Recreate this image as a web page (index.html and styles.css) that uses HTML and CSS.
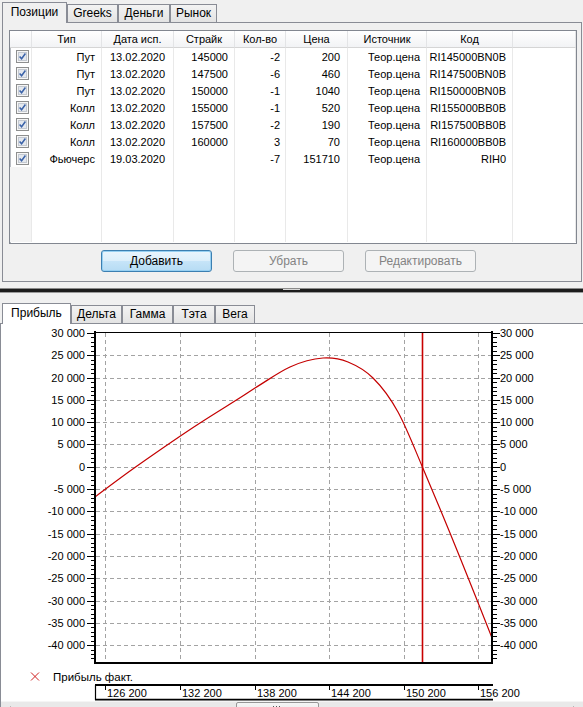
FILE: index.html
```html
<!DOCTYPE html>
<html lang="ru">
<head>
<meta charset="utf-8">
<title>Позиции</title>
<link rel="stylesheet" href="styles.css">
</head>
<body>
<div class="top">
  <div class="tabs">
    <div class="tab active t-pos">Позиции</div>
    <div class="tab t-greeks">Greeks</div>
    <div class="tab t-money">Деньги</div>
    <div class="tab t-market">Рынок</div>
  </div>
  <div class="panel">
    <div class="grid">
      <table class="pos">
        <colgroup>
          <col class="w-cb"><col class="w-type"><col class="w-date"><col class="w-strike"><col class="w-qty"><col class="w-price"><col class="w-src"><col class="w-code"><col class="w-rest">
        </colgroup>
        <thead>
          <tr><th></th><th>Тип</th><th>Дата исп.</th><th>Страйк</th><th>Кол-во</th><th>Цена</th><th>Источник</th><th>Код</th><th></th></tr>
        </thead>
        <tbody>
          <tr><td class="c"><svg class="cb" viewBox="0 0 13 13"><rect x="0.5" y="0.5" width="12" height="12" fill="#f6f6f6" stroke="#8e8f8f"/><rect x="2.5" y="2.5" width="8" height="8" fill="#e4e8ee" stroke="#c4c9d1"/><path d="M3.6 6.4l2 2.3 3.8-5.2" fill="none" stroke="#3a62a8" stroke-width="1.5"/></svg></td><td>Пут</td><td class="d">13.02.2020</td><td>145000</td><td class="q">-2</td><td class="p">200</td><td>Теор.цена</td><td>RI145000BN0B</td><td></td></tr>
          <tr><td class="c"><svg class="cb" viewBox="0 0 13 13"><rect x="0.5" y="0.5" width="12" height="12" fill="#f6f6f6" stroke="#8e8f8f"/><rect x="2.5" y="2.5" width="8" height="8" fill="#e4e8ee" stroke="#c4c9d1"/><path d="M3.6 6.4l2 2.3 3.8-5.2" fill="none" stroke="#3a62a8" stroke-width="1.5"/></svg></td><td>Пут</td><td class="d">13.02.2020</td><td>147500</td><td class="q">-6</td><td class="p">460</td><td>Теор.цена</td><td>RI147500BN0B</td><td></td></tr>
          <tr><td class="c"><svg class="cb" viewBox="0 0 13 13"><rect x="0.5" y="0.5" width="12" height="12" fill="#f6f6f6" stroke="#8e8f8f"/><rect x="2.5" y="2.5" width="8" height="8" fill="#e4e8ee" stroke="#c4c9d1"/><path d="M3.6 6.4l2 2.3 3.8-5.2" fill="none" stroke="#3a62a8" stroke-width="1.5"/></svg></td><td>Пут</td><td class="d">13.02.2020</td><td>150000</td><td class="q">-1</td><td class="p">1040</td><td>Теор.цена</td><td>RI150000BN0B</td><td></td></tr>
          <tr><td class="c"><svg class="cb" viewBox="0 0 13 13"><rect x="0.5" y="0.5" width="12" height="12" fill="#f6f6f6" stroke="#8e8f8f"/><rect x="2.5" y="2.5" width="8" height="8" fill="#e4e8ee" stroke="#c4c9d1"/><path d="M3.6 6.4l2 2.3 3.8-5.2" fill="none" stroke="#3a62a8" stroke-width="1.5"/></svg></td><td>Колл</td><td class="d">13.02.2020</td><td>155000</td><td class="q">-1</td><td class="p">520</td><td>Теор.цена</td><td>RI155000BB0B</td><td></td></tr>
          <tr><td class="c"><svg class="cb" viewBox="0 0 13 13"><rect x="0.5" y="0.5" width="12" height="12" fill="#f6f6f6" stroke="#8e8f8f"/><rect x="2.5" y="2.5" width="8" height="8" fill="#e4e8ee" stroke="#c4c9d1"/><path d="M3.6 6.4l2 2.3 3.8-5.2" fill="none" stroke="#3a62a8" stroke-width="1.5"/></svg></td><td>Колл</td><td class="d">13.02.2020</td><td>157500</td><td class="q">-2</td><td class="p">190</td><td>Теор.цена</td><td>RI157500BB0B</td><td></td></tr>
          <tr><td class="c"><svg class="cb" viewBox="0 0 13 13"><rect x="0.5" y="0.5" width="12" height="12" fill="#f6f6f6" stroke="#8e8f8f"/><rect x="2.5" y="2.5" width="8" height="8" fill="#e4e8ee" stroke="#c4c9d1"/><path d="M3.6 6.4l2 2.3 3.8-5.2" fill="none" stroke="#3a62a8" stroke-width="1.5"/></svg></td><td>Колл</td><td class="d">13.02.2020</td><td>160000</td><td class="q">3</td><td class="p">70</td><td>Теор.цена</td><td>RI160000BB0B</td><td></td></tr>
          <tr><td class="c"><svg class="cb" viewBox="0 0 13 13"><rect x="0.5" y="0.5" width="12" height="12" fill="#f6f6f6" stroke="#8e8f8f"/><rect x="2.5" y="2.5" width="8" height="8" fill="#e4e8ee" stroke="#c4c9d1"/><path d="M3.6 6.4l2 2.3 3.8-5.2" fill="none" stroke="#3a62a8" stroke-width="1.5"/></svg></td><td>Фьючерс</td><td class="d">19.03.2020</td><td></td><td class="q">-7</td><td class="p">151710</td><td>Теор.цена</td><td>RIH0</td><td></td></tr>
          <tr class="fill"><td class="c"></td><td></td><td></td><td></td><td></td><td></td><td></td><td></td><td></td></tr>
        </tbody>
      </table>
    </div>
    <div class="buttons">
      <button class="btn default">Добавить</button>
      <button class="btn" disabled>Убрать</button>
      <button class="btn" disabled>Редактировать</button>
    </div>
  </div>
</div>

<div class="splitter"><div class="bar"><span class="grip"></span></div></div>

<div class="bottom">
  <div class="tabs">
    <div class="tab active light t-profit">Прибыль</div>
    <div class="tab t-delta">Дельта</div>
    <div class="tab t-gamma">Гамма</div>
    <div class="tab t-theta">Тэта</div>
    <div class="tab t-vega">Вега</div>
  </div>
  <div class="chart">
    <svg class="plot" width="582" height="377" viewBox="1 324 582 377">
      <defs>
        <path id="minor" d="M0 337.5h4M0 342.5h4M0 346.5h4M0 351.5h4M0 360.5h4M0 364.5h4M0 369.5h4M0 373.5h4M0 382.5h4M0 387.5h4M0 391.5h4M0 395.5h4M0 404.5h4M0 409.5h4M0 413.5h4M0 418.5h4M0 427.5h4M0 431.5h4M0 436.5h4M0 440.5h4M0 449.5h4M0 453.5h4M0 458.5h4M0 462.5h4M0 471.5h4M0 476.5h4M0 480.5h4M0 485.5h4M0 494.5h4M0 498.5h4M0 502.5h4M0 507.5h4M0 516.5h4M0 520.5h4M0 525.5h4M0 529.5h4M0 538.5h4M0 543.5h4M0 547.5h4M0 551.5h4M0 560.5h4M0 565.5h4M0 569.5h4M0 574.5h4M0 583.5h4M0 587.5h4M0 592.5h4M0 596.5h4M0 605.5h4M0 609.5h4M0 614.5h4M0 618.5h4M0 627.5h4M0 632.5h4M0 636.5h4M0 641.5h4M0 650.5h4M0 654.5h4M0 658.5h4"/>
        <path id="major" d="M0 333.5h7M0 355.5h7M0 378.5h7M0 400.5h7M0 422.5h7M0 444.5h7M0 467.5h7M0 489.5h7M0 511.5h7M0 534.5h7M0 556.5h7M0 578.5h7M0 601.5h7M0 623.5h7M0 645.5h7"/>
        <clipPath id="plotclip"><rect x="96" y="333" width="395" height="329"/></clipPath>
      </defs>

      <g class="grid-lines">
        <path d="M96 355.5H491M96 378.5H491M96 400.5H491M96 422.5H491M96 444.5H491M96 467.5H491M96 489.5H491M96 511.5H491M96 534.5H491M96 556.5H491M96 578.5H491M96 601.5H491M96 623.5H491M96 645.5H491"/>
        <path d="M105.5 333V662M180.5 333V662M255.5 333V662M329.5 333V662M404.5 333V662M478.5 333V662"/>
      </g>

      <g class="axis">
        <use href="#minor" x="91"/>
        <use href="#minor" x="493"/>
        <use href="#major" x="87"/>
        <use href="#major" x="493"/>
        <path class="frame2" d="M95 331V664M492 331V664M94 663H493"/>
        <path class="frame1" d="M94 332.5H493"/>
      </g>

      <g class="ylabels left">
        <text x="85" y="337">30 000</text>
        <text x="85" y="359">25 000</text>
        <text x="85" y="382">20 000</text>
        <text x="85" y="404">15 000</text>
        <text x="85" y="426">10 000</text>
        <text x="85" y="448">5 000</text>
        <text x="85" y="471">0</text>
        <text x="85" y="493">-5 000</text>
        <text x="85" y="515">-10 000</text>
        <text x="85" y="538">-15 000</text>
        <text x="85" y="560">-20 000</text>
        <text x="85" y="582">-25 000</text>
        <text x="85" y="605">-30 000</text>
        <text x="85" y="627">-35 000</text>
        <text x="85" y="649">-40 000</text>
      </g>
      <g class="ylabels right">
        <text x="500" y="337">30 000</text>
        <text x="500" y="359">25 000</text>
        <text x="500" y="382">20 000</text>
        <text x="500" y="404">15 000</text>
        <text x="500" y="426">10 000</text>
        <text x="500" y="448">5 000</text>
        <text x="500" y="471">0</text>
        <text x="500" y="493">-5 000</text>
        <text x="500" y="515">-10 000</text>
        <text x="500" y="538">-15 000</text>
        <text x="500" y="560">-20 000</text>
        <text x="500" y="582">-25 000</text>
        <text x="500" y="605">-30 000</text>
        <text x="500" y="627">-35 000</text>
        <text x="500" y="649">-40 000</text>
      </g>

      <g clip-path="url(#plotclip)">
        <path class="curve" d="M95 497 C102 491.8 119.5 478.3 137 466 C154.5 453.7 180.3 435.8 200 423 C219.7 410.2 240 398.2 255 388 C270 378.8 278.7 372.2 290 367 C301.3 361.8 313.3 358.6 323 358 C332.7 357.4 339.7 358.6 348 362 C356.3 365.4 364.7 369.8 373 378 C381.3 386.2 389.8 397 398 412 C406.2 427 413.3 445.5 422 466 C430.7 486.5 440.8 510.7 450 533 C459.2 555.3 470 582.5 477 600 C484 617.5 489.5 631.7 492 638"/>
        <path class="marker" d="M422.5 333V662"/>
      </g>

      <g class="legend">
        <path class="legend-x" d="M31 672.5L39 680.5M39 672.5L31 680.5"/>
        <text class="legend-text" x="53" y="681">Прибыль факт.</text>
      </g>

      <g class="xaxis">
        <path class="xbox" d="M95 685H493M95 699.7H493"/>
        <path class="xleft" d="M95.5 685V700"/>
        <path class="xticks" d="M105.5 686V690M180.5 686V690M255.5 686V690M329.5 686V690M404.5 686V690M478.5 686V690"/>
        <text x="107" y="697">126 200</text>
        <text x="182" y="697">132 200</text>
        <text x="257" y="697">138 200</text>
        <text x="331" y="697">144 200</text>
        <text x="406" y="697">150 200</text>
        <text x="480" y="697">156 200</text>
      </g>
    </svg>
    <div class="hscroll">
      <div class="arrow"><svg width="17" height="17" viewBox="0 0 17 17"><path d="M10 5L6 8.5 10 12" fill="none" stroke="#404040" stroke-width="1.5"/></svg></div>
      <div class="track"><div class="thumb"><span class="thumb-grip"></span></div></div>
      <div class="arrow"><svg width="17" height="17" viewBox="0 0 17 17"><path d="M7 5l4 3.5L7 12" fill="none" stroke="#404040" stroke-width="1.5"/></svg></div>
    </div>
  </div>
</div>
</body>
</html>
```

FILE: styles.css
```css
* { box-sizing: border-box; }

html, body {
  margin: 0;
  height: 707px;
  overflow: hidden;
}

body {
  background: #f0f0f0;
  font-family: "Liberation Sans", Arial, sans-serif;
  font-size: 12px;
  color: #000;
}

/* ---------- tabs ---------- */
.tabs {
  display: flex;
  align-items: flex-end;
  height: 22px;
  padding-left: 2px;
  position: relative;
  z-index: 1;
}

.tab {
  height: 18px;
  line-height: 16px;
  text-align: center;
  border: 1px solid #898c95;
  border-bottom: 0;
  background: linear-gradient(#f3f3f3, #e3e3e3);
  font-size: 12px;
  white-space: nowrap;
}

.tab.active {
  height: 21px;
  line-height: 19px;
  margin-bottom: -1px;
  background: #f0f0f0;
}

.tab.active.light { background: #fff; }

.t-pos { width: 65px; }
.t-greeks { width: 51px; }
.t-money { width: 52px; }
.t-market { width: 47px; }

.t-profit { width: 69px; }
.t-delta { width: 51px; }
.t-gamma { width: 51px; }
.t-theta { width: 42px; }
.t-vega { width: 40px; }

/* ---------- positions panel ---------- */
.panel {
  margin: 0 1px 0 2px;
  border: 1px solid #898c95;
  padding: 7px 4px 9px 6px;
}

.grid {
  height: 214px;
  border: 1px solid #828790;
  box-shadow: inset 1px 1px 0 #b9bcc2;
  background: #fff;
  overflow: hidden;
}

.pos {
  width: 566px;
  table-layout: fixed;
  border-collapse: separate;
  border-spacing: 0;
  font-size: 11px;
}

.w-cb { width: 22px; }
.w-type { width: 70px; }
.w-date { width: 72px; }
.w-strike { width: 61px; }
.w-qty { width: 51px; }
.w-price { width: 62px; }
.w-src { width: 79px; }
.w-code { width: 86px; }
.w-rest { width: 63px; }

.pos th {
  height: 17px;
  padding: 0;
  font-weight: normal;
  text-align: center;
  background: linear-gradient(#ffffff, #f2f3f5);
  border-right: 1px solid #e3e4e6;
  border-bottom: 1px solid #d5d5d5;
  white-space: nowrap;
}

.pos td {
  height: 17px;
  padding: 0 6px 0 0;
  text-align: right;
  border-right: 1px solid #e9e9e9;
  white-space: nowrap;
  overflow: hidden;
}

.pos td.d { text-align: center; padding: 0; }
.pos td.q { padding-right: 5px; }
.pos td.p { padding-right: 7px; }
.pos td.c { padding: 0 0 0 6px; text-align: left; line-height: 0; }

.pos tr.fill td { height: 75px; }
.pos tr.fill td.c { background: #f4f4f4; }

.cb {
  width: 13px;
  height: 13px;
  display: inline-block;
}

/* ---------- buttons ---------- */
.buttons {
  display: flex;
  gap: 21px;
  padding-left: 92px;
  margin-top: 6px;
}

.btn {
  width: 111px;
  height: 22px;
  margin: 0;
  padding: 0;
  border: 1px solid #adb2b5;
  border-radius: 3px;
  background: #f4f4f4;
  color: #838383;
  font: 12px "Liberation Sans", Arial, sans-serif;
}

.btn.default {
  border-color: #3c7fb1;
  background: linear-gradient(#eaf5fd 0%, #dceffb 48%, #c6e4f8 52%, #b6dcf4 100%);
  box-shadow: inset 0 0 0 1px #97d0f2;
  color: #000;
}

/* ---------- splitter ---------- */
.splitter {
  height: 19px;
  padding-top: 6px;
}

.splitter .bar {
  position: relative;
  height: 5px;
  background: #1c1c1c;
  border-top: 1px solid #8a8a8a;
  border-bottom: 1px solid #9a9a9a;
}

.grip {
  position: absolute;
  left: 283px;
  top: 0;
  width: 17px;
  height: 1px;
  background: #d8d8d8;
}

/* ---------- chart ---------- */
.chart {
  height: 400px;
  background: #fff;
  border-top: 1px solid #898c95;
  border-left: 1px solid #898c95;
}

.plot { display: block; }

.plot text {
  font-family: "Liberation Sans", Arial, sans-serif;
  font-size: 11px;
  fill: #000;
}

.ylabels.left text { text-anchor: end; }

.grid-lines path {
  fill: none;
  stroke: #a3a3a3;
  stroke-width: 1;
  stroke-dasharray: 4 3;
}

.axis use { stroke: #000; stroke-width: 1; fill: none; }
.axis .frame2 { stroke: #000; stroke-width: 2; fill: none; }
.axis .frame1 { stroke: #000; stroke-width: 1; fill: none; }

.curve {
  fill: none;
  stroke: #c40000;
  stroke-width: 1.2;
}

.marker {
  fill: none;
  stroke: #c80000;
  stroke-width: 1.6;
}

.legend-x {
  fill: none;
  stroke: #d02020;
  stroke-width: 1;
}

.plot .legend-text { font-size: 11.5px; }

.xbox { stroke: #000; stroke-width: 1.8; fill: none; }
.xleft { stroke: #000; stroke-width: 1.2; fill: none; }
.xticks { stroke: #000; stroke-width: 1; fill: none; }

/* ---------- horizontal scrollbar ---------- */
.hscroll {
  display: flex;
  height: 17px;
  background: #e9e9e9;
  border-top: 1px solid #f5f5f5;
}

.arrow { width: 17px; height: 17px; }
.arrow svg { display: block; }

.track { flex: 1; }

.thumb {
  position: relative;
  width: 83px;
  height: 17px;
  margin-left: 218px;
  border: 1px solid #979797;
  border-radius: 2px;
  background: linear-gradient(#f6f6f6, #e2e2e2);
}

.thumb-grip {
  position: absolute;
  left: 36px;
  top: 3px;
  width: 7px;
  height: 8px;
  background: repeating-linear-gradient(90deg, #555 0 1px, transparent 1px 3px);
}
```
